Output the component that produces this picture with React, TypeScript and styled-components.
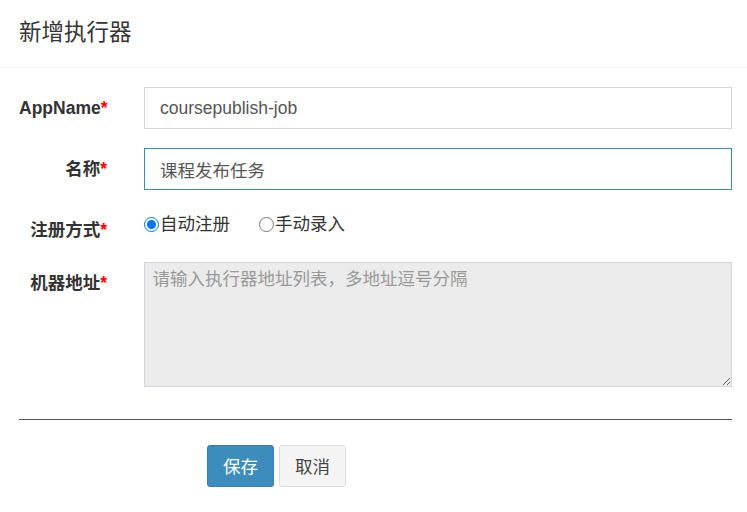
import React from "react";
import styled, { createGlobalStyle } from "styled-components";

const Global = createGlobalStyle`
  html, body { margin: 0; padding: 0; background: #fff; }
  body {
    font-family: "Liberation Sans", Arial, "Noto Sans CJK SC", sans-serif;
    font-size: 17.5px;
    color: #333;
  }
  * { box-sizing: border-box; }
`;

const Modal = styled.div`
  width: 747px;
  min-height: 512px;
  background: #fff;
`;

const Header = styled.div`
  padding: 17px 19px 18px;
  border-bottom: 1px solid #f4f4f4;
`;

const Title = styled.h4`
  margin: 0;
  font-size: 22.5px;
  line-height: 32px;
  font-weight: normal;
  color: #333;
`;

const Body = styled.form`
  padding: 19px 15px 0 19px;
`;

const Row = styled.div`
  display: grid;
  grid-template-columns: 88px 1fr;
  column-gap: 37px;
  margin-bottom: 19px;
`;

const Label = styled.label`
  display: block;
  text-align: right;
  white-space: nowrap;
  font-weight: bold;
  padding-top: 8.75px;
  line-height: 25px;
  color: #333;
`;

const Star = styled.span`
  color: #f00;
`;

const TextInput = styled.input<{ $focus?: boolean }>`
  display: block;
  width: 100%;
  height: 42px;
  padding: 0 15px;
  font: inherit;
  font-size: 17.5px;
  color: #555;
  background: #fff;
  border: 1px solid ${(p) => (p.$focus ? "#3c8dbc" : "#d2d6de")};
  border-radius: 0;
  outline: none;
`;

const RadioGroup = styled.div`
  display: flex;
  align-items: center;
  gap: 29px;
  height: 34px;
  padding-bottom: 4px;
`;

const RadioLabel = styled.label`
  display: flex;
  align-items: center;
  line-height: 25px;
  color: #333;
`;

const Radio = styled.input`
  width: 15px;
  height: 15px;
  margin: 0 1px 0 0;
  accent-color: #0075ff;
`;

const Area = styled.textarea`
  display: block;
  width: 100%;
  height: 125px;
  padding: 4px 7.5px;
  font: inherit;
  font-size: 17.5px;
  line-height: 25px;
  color: #555;
  background: #ebebeb;
  border: 1px solid #d2d6de;
  border-radius: 0;
  outline: none;
  &::placeholder { color: #999; }
`;

const Rule = styled.hr`
  margin: 32px 0 0;
  border: 0;
  border-top: 1px solid #555;
`;

const Actions = styled.div`
  display: flex;
  gap: 5px;
  margin: 25px 0 0 188px;
`;

const Button = styled.button<{ $primary?: boolean }>`
  width: 67px;
  height: 42px;
  padding: 0 0 2px;
  font: inherit;
  font-size: 17.5px;
  border-radius: 3px;
  cursor: pointer;
  color: ${(p) => (p.$primary ? "#fff" : "#444")};
  background: ${(p) => (p.$primary ? "#3c8dbc" : "#f4f4f4")};
  border: 1px solid ${(p) => (p.$primary ? "#367fa9" : "#ddd")};
`;

export default function App() {
  return (
    <Modal>
      <Global />
      <Header>
        <Title>新增执行器</Title>
      </Header>
      <Body onSubmit={(e) => e.preventDefault()}>
        <Row>
          <Label>
            AppName<Star>*</Star>
          </Label>
          <TextInput defaultValue="coursepublish-job" />
        </Row>
        <Row>
          <Label>
            名称<Star>*</Star>
          </Label>
          <TextInput $focus defaultValue="课程发布任务" />
        </Row>
        <Row>
          <Label>
            注册方式<Star>*</Star>
          </Label>
          <RadioGroup>
            <RadioLabel>
              <Radio type="radio" name="addressType" defaultChecked />
              自动注册
            </RadioLabel>
            <RadioLabel>
              <Radio type="radio" name="addressType" />
              手动录入
            </RadioLabel>
          </RadioGroup>
        </Row>
        <Row>
          <Label>
            机器地址<Star>*</Star>
          </Label>
          <Area readOnly placeholder="请输入执行器地址列表，多地址逗号分隔" />
        </Row>
        <Rule />
        <Actions>
          <Button $primary type="submit">保存</Button>
          <Button type="button">取消</Button>
        </Actions>
      </Body>
    </Modal>
  );
}
